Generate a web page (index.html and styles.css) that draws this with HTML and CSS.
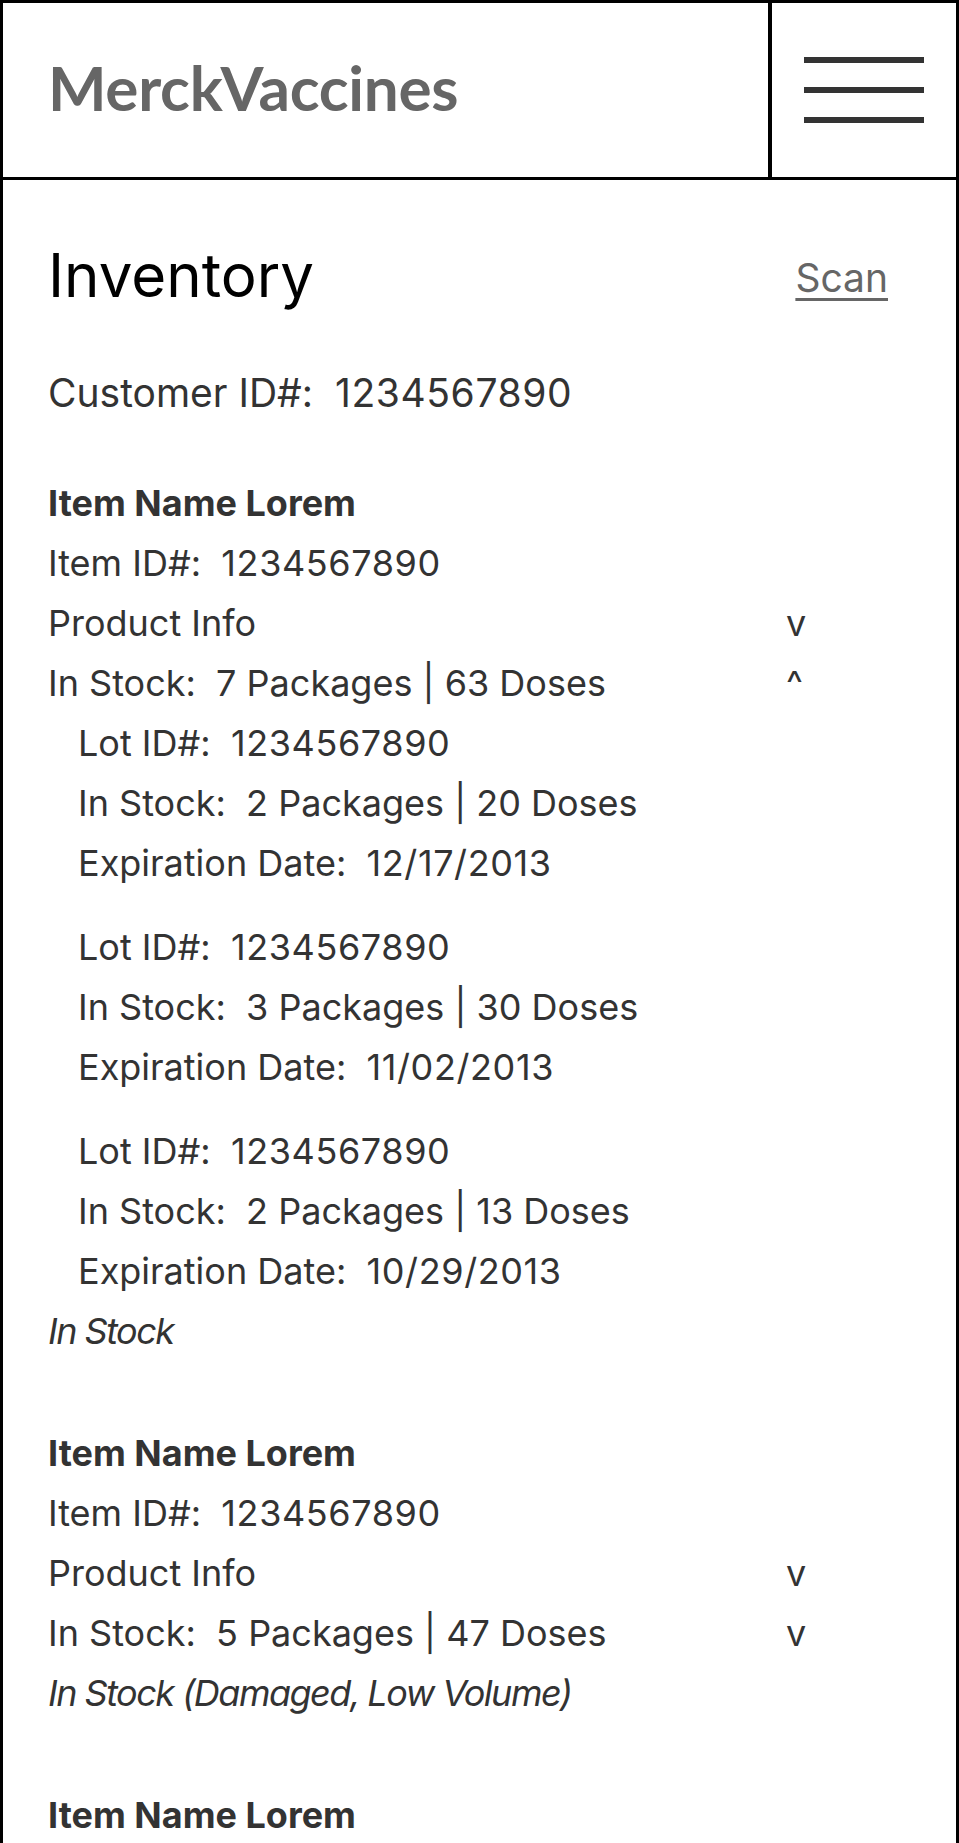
FILE: index.html
```html
<!DOCTYPE html>
<html lang="en">
<head>
<meta charset="utf-8">
<title>MerckVaccines – Inventory</title>
<link rel="stylesheet" href="styles.css">
</head>
<body>
<div class="frame">
  <header class="topbar">
    <div class="brand">MerckVaccines</div>
    <div class="menu" aria-label="Menu">
      <span class="bar"></span>
      <span class="bar"></span>
      <span class="bar"></span>
    </div>
  </header>

  <main class="content">
    <div class="title-row">
      <h1 class="title">Inventory</h1>
      <a class="scan" href="#">Scan</a>
    </div>

    <p class="customer">Customer ID#:&nbsp;&nbsp;<span class="num">1234567890</span></p>

    <section class="item">
      <div class="row name">Item Name Lorem</div>
      <div class="row">Item ID#:&nbsp;&nbsp;<span class="num">1234567890</span></div>
      <div class="row"><span class="label">Product Info</span><span class="chev">v</span></div>
      <div class="row"><span class="label">In Stock:&nbsp; 7 Packages | 63 Doses</span><span class="chev">^</span></div>
      <div class="lots">
        <div class="lot">
          <div class="row">Lot ID#:&nbsp;&nbsp;<span class="num">1234567890</span></div>
          <div class="row">In Stock:&nbsp; 2 Packages | 20 Doses</div>
          <div class="row">Expiration Date:&nbsp;&nbsp;<span class="num">12/17/2013</span></div>
        </div>
        <div class="lot">
          <div class="row">Lot ID#:&nbsp;&nbsp;<span class="num">1234567890</span></div>
          <div class="row">In Stock:&nbsp; 3 Packages | 30 Doses</div>
          <div class="row">Expiration Date:&nbsp;&nbsp;<span class="num">11/02/2013</span></div>
        </div>
        <div class="lot">
          <div class="row">Lot ID#:&nbsp;&nbsp;<span class="num">1234567890</span></div>
          <div class="row">In Stock:&nbsp; 2 Packages | 13 Doses</div>
          <div class="row">Expiration Date:&nbsp;&nbsp;<span class="num">10/29/2013</span></div>
        </div>
      </div>
      <div class="row status">In Stock</div>
    </section>

    <section class="item">
      <div class="row name">Item Name Lorem</div>
      <div class="row">Item ID#:&nbsp;&nbsp;<span class="num">1234567890</span></div>
      <div class="row"><span class="label">Product Info</span><span class="chev">v</span></div>
      <div class="row"><span class="label">In Stock:&nbsp; 5 Packages | 47 Doses</span><span class="chev">v</span></div>
      <div class="row status">In Stock (Damaged, Low Volume)</div>
    </section>

    <section class="item">
      <div class="row name">Item Name Lorem</div>
    </section>
  </main>
</div>
</body>
</html>
```
FILE: styles.css
```css
html {
  overflow: hidden;
}

body {
  margin: 0;
  background: #fff;
  font-family: Inter, "Noto Sans", sans-serif;
  color: #333;
}

.frame {
  box-sizing: border-box;
  width: 959px;
  min-height: 1843px;
  border: 3px solid #000;
  border-bottom: none;
}

/* Header */
.topbar {
  display: flex;
  height: 174px;
  border-bottom: 3px solid #000;
}

.brand {
  flex: 1;
  display: flex;
  align-items: center;
  padding-left: 45px;
  padding-bottom: 7px;
  font-family: Lato, "Liberation Sans", sans-serif;
  font-weight: 700;
  font-size: 62px;
  letter-spacing: -0.3px;
  color: #666;
}

.menu {
  width: 184px;
  border-left: 4px solid #000;
  display: flex;
  flex-direction: column;
  align-items: center;
  justify-content: center;
  gap: 24px;
}

.bar {
  display: block;
  width: 120px;
  height: 6px;
  background: #333;
}

/* Content */
.content {
  padding: 59px 68px 0 45px;
}

.title-row {
  display: flex;
  justify-content: space-between;
  align-items: center;
}

.title {
  margin: 0;
  font-size: 60px;
  line-height: 72px;
  font-weight: 400;
  color: #000;
}

.scan {
  font-size: 39px;
  line-height: 48px;
  padding-top: 6px;
  color: #666;
  text-decoration: underline;
  text-decoration-thickness: 3px;
  text-underline-offset: 6px;
}

.customer {
  margin: 52px 0 0;
  font-size: 39px;
  line-height: 60px;
}

.num {
  letter-spacing: 0.6px;
}

.item {
  margin-top: 62px;
}

.customer + .item {
  margin-top: 50px;
}

.row {
  display: flex;
  font-size: 36px;
  line-height: 60px;
  white-space: nowrap;
}

.row .label {
  flex: 1;
}

.row .chev {
  width: 102px;
}

.name {
  font-weight: 700;
}

.lots {
  padding-left: 30px;
}

.lot + .lot {
  margin-top: 24px;
}

.status {
  font-style: italic;
  letter-spacing: -1.5px;
}
```
